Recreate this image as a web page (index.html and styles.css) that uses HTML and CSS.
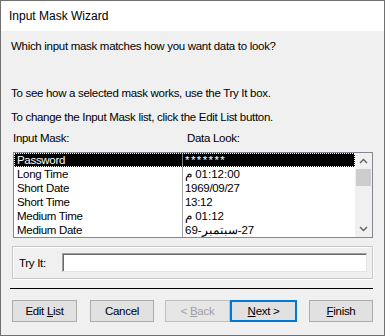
FILE: index.html
```html
<!DOCTYPE html>
<html lang="en">
<head>
    <meta charset="UTF-8">
    <title>Input Mask Wizard</title>
    <link rel="stylesheet" href="styles.css">
</head>
<body>
    <div class="window">
        <div class="titlebar">Input Mask Wizard</div>
        <div class="content">
            <p class="intro">Which input mask matches how you want data to look?</p>
            <p class="hint first">To see how a selected mask works, use the Try It box.</p>
            <p class="hint">To change the Input Mask list, click the Edit List button.</p>

            <div class="list-header">
                <span class="col-name">Input Mask:</span>
                <span class="col-look">Data Look:</span>
            </div>

            <div class="listbox">
                <div class="rows">
                    <div class="row selected">
                        <span class="cell name">Password</span>
                        <span class="cell look masked">*******</span>
                    </div>
                    <div class="row">
                        <span class="cell name">Long Time</span>
                        <span class="cell look"><span dir="rtl">01:12:00 م</span></span>
                    </div>
                    <div class="row">
                        <span class="cell name">Short Date</span>
                        <span class="cell look">1969/09/27</span>
                    </div>
                    <div class="row">
                        <span class="cell name">Short Time</span>
                        <span class="cell look">13:12</span>
                    </div>
                    <div class="row">
                        <span class="cell name">Medium Time</span>
                        <span class="cell look"><span dir="rtl">01:12 م</span></span>
                    </div>
                    <div class="row">
                        <span class="cell name">Medium Date</span>
                        <span class="cell look"><span dir="rtl">27-سبتمبر-69</span></span>
                    </div>
                </div>
                <div class="scrollbar">
                    <div class="sb-button">
                        <svg width="9" height="6" viewBox="0 0 9 6"><path d="M1 5 L4.5 1.5 L8 5" fill="none" stroke="#606060" stroke-width="1.4"/></svg>
                    </div>
                    <div class="sb-thumb"></div>
                    <div class="sb-track"></div>
                    <div class="sb-button">
                        <svg width="9" height="6" viewBox="0 0 9 6"><path d="M1 1 L4.5 4.5 L8 1" fill="none" stroke="#606060" stroke-width="1.4"/></svg>
                    </div>
                </div>
            </div>

            <div class="tryit">
                <label for="tryInput">Try It:</label>
                <input type="text" id="tryInput" class="try-input">
            </div>

            <div class="separator"></div>

            <div class="buttons">
                <button class="btn edit">Edit <u>L</u>ist</button>
                <button class="btn cancel">Cancel</button>
                <button class="btn back" disabled>&lt; <u>B</u>ack</button>
                <button class="btn next"><u>N</u>ext &gt;</button>
                <button class="btn finish"><u>F</u>inish</button>
            </div>
        </div>
    </div>
</body>
</html>
```

FILE: styles.css
```css
html, body {
    margin: 0;
    padding: 0;
    background-color: #f0f0f0;
}

.window {
    width: 385px;
    height: 336px;
    box-sizing: border-box;
    border: 1px solid #707070;
    background-color: #f0f0f0;
    font-family: "Liberation Sans", Arial, sans-serif;
    font-size: 11.5px;
    letter-spacing: -0.3px;
    color: #000;
    overflow: hidden;
}

.titlebar {
    height: 30px;
    line-height: 30px;
    padding-left: 8px;
    background-color: #fff;
    font-size: 12px;
    letter-spacing: 0;
}

.content {
    padding: 0 11px 0 9px;
}

.intro, .hint {
    margin: 0;
    line-height: 16px;
    padding-left: 1px;
}

.intro {
    margin-top: 7px;
}

.hint.first {
    margin-top: 31px;
}

.hint {
    margin-top: 8px;
}

.list-header {
    display: flex;
    margin-top: 5px;
    line-height: 16px;
    padding-left: 3px;
}

.col-name {
    width: 174px;
}

/* list box with two columns and a scrollbar */
.listbox {
    display: flex;
    margin: 6px 0 0 3px;
    width: 360px;
    height: 86px;
    box-sizing: border-box;
    border: 1px solid #828790;
    background-color: #fff;
}

.rows {
    flex: 1;
    display: flex;
    flex-direction: column;
}

.row {
    display: flex;
    height: 14px;
    line-height: 14px;
}

.cell {
    white-space: nowrap;
    overflow: hidden;
}

.cell.name {
    width: 165px;
    padding-left: 3px;
    border-right: 1px solid #a0a0a0;
}

.cell.look {
    flex: 1;
    padding-left: 2px;
}

.cell.masked {
    letter-spacing: 1.4px;
}

.row.selected {
    background-color: #000;
    color: #fff;
    outline: 1px dotted #fff;
    outline-offset: -1px;
}

.row.selected .cell.name {
    border-right-color: #808080;
}

.scrollbar {
    width: 17px;
    display: flex;
    flex-direction: column;
    background-color: #f0f0f0;
}

.sb-button {
    height: 16px;
    display: flex;
    align-items: center;
    justify-content: center;
}

.sb-thumb {
    height: 17px;
    margin: 0 1px;
    background-color: #cdcdcd;
}

.sb-track {
    flex: 1;
}

/* group box */
.tryit {
    display: flex;
    align-items: center;
    margin: 8px 0 0 2px;
    width: 361px;
    height: 33px;
    box-sizing: border-box;
    border: 1px solid #c8c8c8;
    box-shadow: inset 1px 1px #fff, 1px 1px #fff;
    padding-left: 6px;
}

.tryit label {
    width: 43px;
}

.try-input {
    width: 305px;
    height: 19px;
    box-sizing: border-box;
    margin: 0;
    padding: 0 2px;
    border: 1px solid;
    border-color: #a0a0a0 #e3e3e3 #e3e3e3 #a0a0a0;
    box-shadow: inset 1px 1px #696969;
    background-color: #fff;
    font: inherit;
}

.separator {
    margin: 9px 0 0 0;
    height: 1px;
    width: 363px;
    background-color: #000;
}

.buttons {
    display: flex;
    margin: 11px 0 0 2px;
}

.btn {
    height: 22px;
    box-sizing: border-box;
    margin: 0;
    padding: 0;
    border: 1px solid #adadad;
    background-color: #e1e1e1;
    font: inherit;
    letter-spacing: inherit;
    color: #000;
}

.btn.edit {
    width: 65px;
}

.btn.cancel {
    width: 64px;
    margin-left: 13px;
}

.btn.back {
    width: 65px;
    margin-left: 11px;
    color: #a0a0a0;
    border-color: #bfbfbf;
    background-color: #e6e6e6;
}

.btn.next {
    width: 67px;
    border: 2px solid #0078d7;
}

.btn.finish {
    width: 64px;
    margin-left: 12px;
}
```
